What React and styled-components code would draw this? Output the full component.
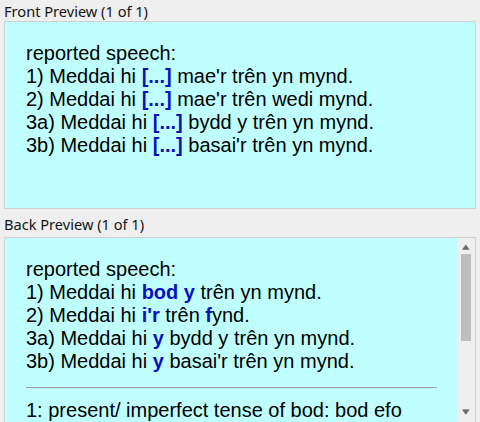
import React from 'react'
import styled, { createGlobalStyle } from 'styled-components'

const Global = createGlobalStyle`
    html, body {
        margin: 0;
        padding: 0;
        background: #efefef;
        overflow: hidden;
    }
`;

const Blank = () => <Blue>[...]</Blue>;

const App = () => {
    return (
        <Page>
            <Global />
            <Label $top={0} $bottom={1}>Front Preview (1 of 1)</Label>
            <Panel $height={186}>
                <Card>
                    <Line>reported speech:</Line>
                    <Line>1) Meddai hi <Blank /> mae'r trên yn mynd.</Line>
                    <Line>2) Meddai hi <Blank /> mae'r trên wedi mynd.</Line>
                    <Line>3a) Meddai hi <Blank /> bydd y trên yn mynd.</Line>
                    <Line>3b) Meddai hi <Blank /> basai'r trên yn mynd.</Line>
                </Card>
            </Panel>
            <Label $top={6} $bottom={4}>Back Preview (1 of 1)</Label>
            <Panel $height={184}>
                <Card>
                    <Line>reported speech:</Line>
                    <Line>1) Meddai hi <Blue>bod y</Blue> trên yn mynd.</Line>
                    <Line>2) Meddai hi <Blue>i'r</Blue> trên <Blue>f</Blue>ynd.</Line>
                    <Line>3a) Meddai hi <Blue>y</Blue> bydd y trên yn mynd.</Line>
                    <Line>3b) Meddai hi <Blue>y</Blue> basai'r trên yn mynd.</Line>
                    <Rule />
                    <Line>1: present/ imperfect tense of bod: bod efo</Line>
                </Card>
                <ScrollBar>
                    <Arrow>▲</Arrow>
                    <Track>
                        <Thumb />
                    </Track>
                    <Arrow $down>▼</Arrow>
                </ScrollBar>
            </Panel>
        </Page>
    )
}

const Page = styled.div`
    display: flex;
    flex-direction: column;
    padding: 2px 4px 0 4px;
    width: 480px;
    box-sizing: border-box;
`;

const Label = styled.div`
    font-family: "Noto Sans", sans-serif;
    font-size: 14.6px;
    line-height: 18px;
    color: #141414;
    margin-top: ${props => props.$top}px;
    margin-bottom: ${props => props.$bottom}px;
`;

const Panel = styled.div`
    display: flex;
    height: ${props => props.$height}px;
    border: 1px solid #cfcfcf;
    background: #bfffff;
    overflow: hidden;
    flex-shrink: 0;
`;

const Card = styled.div`
    flex: 1;
    padding: 20px 20px 0 21px;
    font-family: "Liberation Sans", Arial, sans-serif;
    font-size: 20px;
    line-height: 23px;
    color: #000;
`;

const Line = styled.div`
    white-space: nowrap;
`;

const Blue = styled.b`
    color: #0a10c0;
`;

const Rule = styled.hr`
    border: none;
    border-top: 1px solid #a0a0a0;
    margin: 14px 0 11px 0;
`;

const ScrollBar = styled.div`
    width: 18px;
    display: flex;
    flex-direction: column;
    align-items: center;
    background: #efefef;
`;

const Arrow = styled.div`
    height: 14px;
    font-size: 7px;
    line-height: 14px;
    color: #6a6a6a;
    font-family: "DejaVu Sans", sans-serif;
    transform: scaleX(1.4);
    margin-top: ${props => props.$down ? 'auto' : '2px'};
    margin-bottom: ${props => props.$down ? '3px' : '0'};
`;

const Track = styled.div`
    width: 10px;
    flex: 1;
    display: flex;
    flex-direction: column;
`;

const Thumb = styled.div`
    height: 87px;
    background: #bdbdbd;
`;

export default App
